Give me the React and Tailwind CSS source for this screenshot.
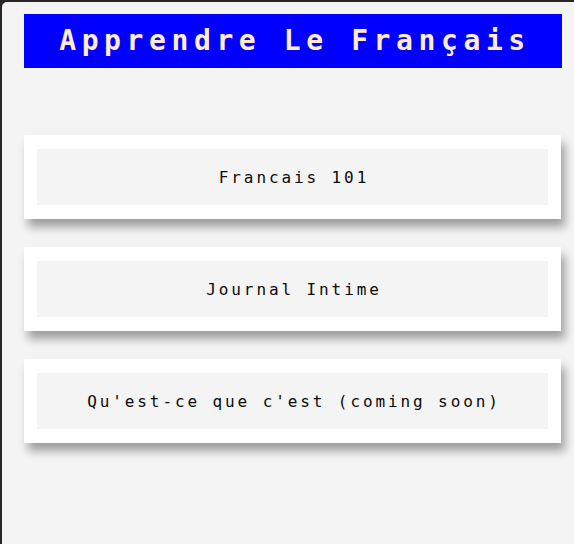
import React from 'react';

const LESSONS = ['Francais 101', 'Journal Intime', "Qu'est-ce que c'est (coming soon)"];

const LessonCard = ({ title }) => (
  <div className="bg-white px-[13px] py-[14px] shadow-[4px_8px_9px_rgba(0,0,0,0.35)]">
    <div className="flex h-[56px] items-center justify-center bg-[#f4f4f4] pt-[2px]">
      <span className="pl-[3px] text-[16px] tracking-[2.9px] text-[#0a0a0a]">{title}</span>
    </div>
  </div>
);

export default function App() {
  return (
    <div className="h-[544px] w-[574px] overflow-hidden bg-[#2a2626]">
      <div
        className="h-full w-full rounded-tl-[5px] bg-[#f4f4f4] pl-[22px] pt-[12px] mt-[2px] ml-[2px]"
        style={{ fontFamily: '"DejaVu Sans Mono", monospace' }}
      >
        {/* Header */}
        <div className="flex h-[54px] w-[538px] items-center justify-center bg-[#0000ff]">
          <h1 className="pl-[4px] text-[28px] font-bold tracking-[5.6px] text-[#ffebcd]">
            Apprendre Le Français
          </h1>
        </div>

        {/* Lessons */}
        <div className="mt-[67px] flex w-[537px] flex-col gap-[28px]">
          {LESSONS.map((lesson) => (
            <LessonCard key={lesson} title={lesson} />
          ))}
        </div>
      </div>
    </div>
  );
}
